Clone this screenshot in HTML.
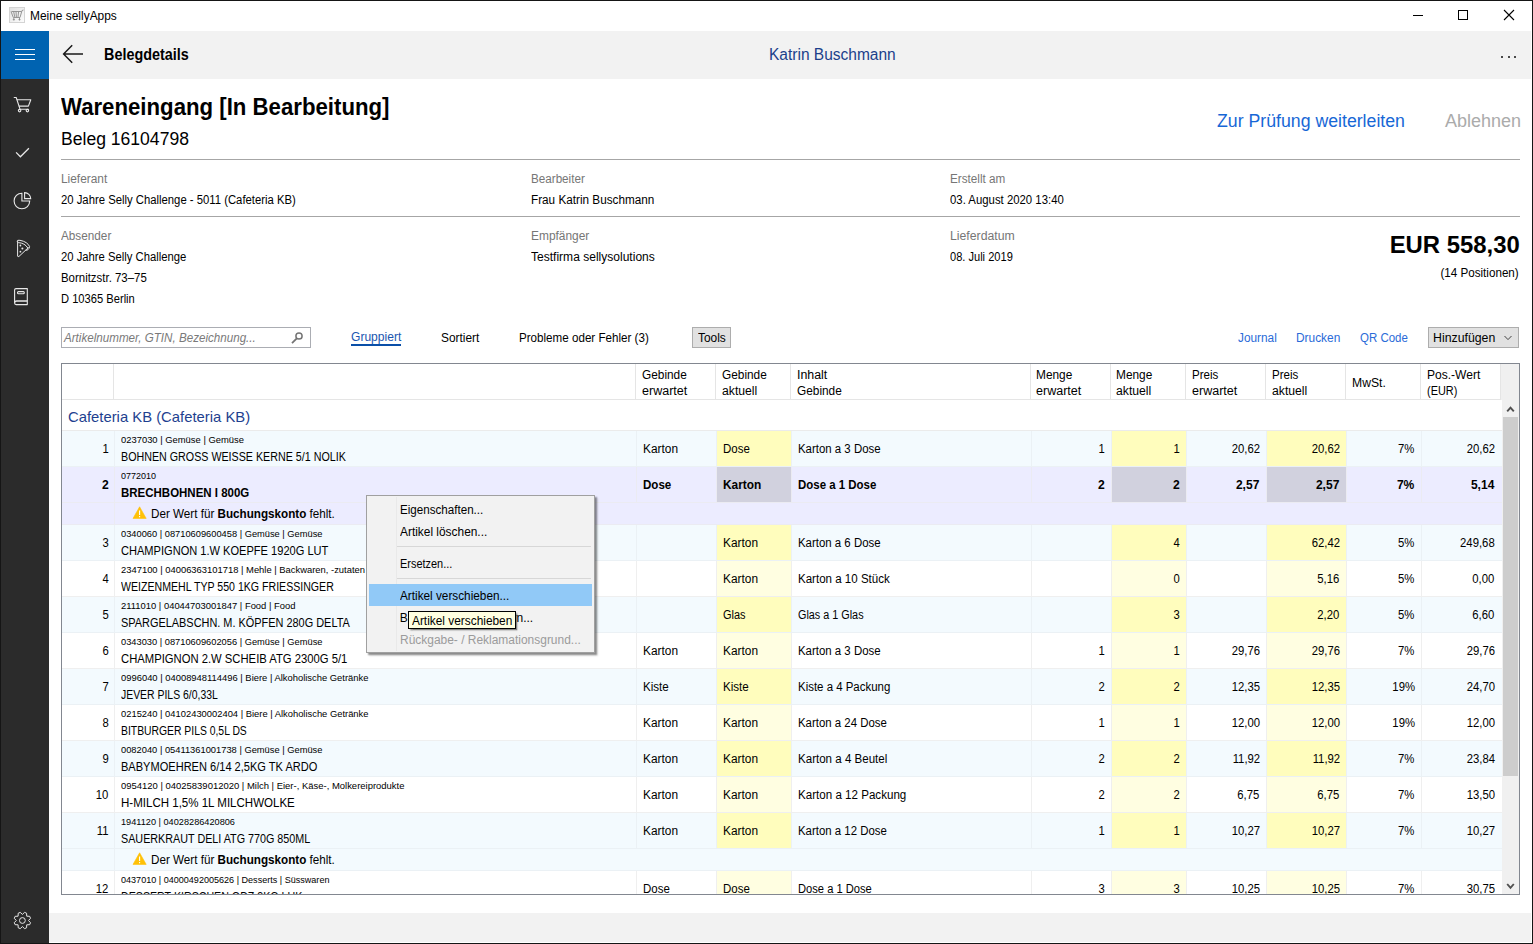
<!DOCTYPE html>
<html lang="de"><head><meta charset="utf-8"><title>Meine sellyApps</title>
<style>
html,body{margin:0;padding:0}
body{width:1533px;height:944px;overflow:hidden;background:#fff;position:relative;font-family:"Liberation Sans",sans-serif;color:#000}
.b,.t,svg{position:absolute}
.t{white-space:nowrap}
b{font-weight:700}
</style></head><body>
<div class="b" style="left:0px;top:0px;width:1533px;height:944px;background:#151515;"></div>
<div class="b" style="left:1px;top:1px;width:1531px;height:942px;background:#fff;"></div>
<div class="b" style="left:9px;top:7px;width:16px;height:16px;background:linear-gradient(135deg,#e2e2e2,#fcfcfc);box-sizing:border-box;border:1px solid #d4d4d4;"></div>
<svg style="left:9px;top:7px" width="16" height="16" viewBox="0 0 16 16" fill="none" stroke="#8c8c8c" stroke-width="0.9"><path d="M2 4.5 L4.3 10.5 H11 L13 3.5 L14.5 3"/><path d="M4.6 4.5 L5.8 10 M7 4.5 L7.4 10 M9.6 4.5 L9 10 M2.5 4.5 H12.5"/><path d="M4.8 11 V13.5 M10.5 11 V13.5 M3.8 12.6 H5.8 M9.5 12.6 H11.5"/></svg>
<div class="t" id="t1" style="top:9px;height:14px;line-height:14px;font-size:12px;left:29.78px;transform-origin:0 0;transform:scaleX(0.9934);">Meine sellyApps</div>
<div class="b" style="left:1413px;top:15px;width:10px;height:1px;background:#000;"></div>
<div class="b" style="left:1458px;top:10px;width:10px;height:10px;box-sizing:border-box;border:1px solid #000;"></div>
<svg style="left:1503px;top:9px" width="12" height="12" viewBox="0 0 12 12"><path d="M1 1 L11 11 M11 1 L1 11" stroke="#000" stroke-width="1.1" fill="none"/></svg>
<div class="b" style="left:49px;top:31px;width:1482px;height:48px;background:#f2f2f2;"></div>
<div class="b" style="left:1px;top:31px;width:48px;height:48px;background:#0063b1;"></div>
<div class="b" style="left:15px;top:49px;width:20px;height:1px;background:#fff;"></div>
<div class="b" style="left:15px;top:54px;width:20px;height:1px;background:#fff;"></div>
<div class="b" style="left:15px;top:59px;width:20px;height:1px;background:#fff;"></div>
<svg style="left:60px;top:42px" width="26" height="24" viewBox="0 0 26 24"><path d="M23 12 H4 M12.2 3.2 L3.6 12 L12.2 20.8" stroke="#1a1a1a" stroke-width="1.5" fill="none"/></svg>
<div class="t" id="t2" style="top:46px;height:17px;line-height:17px;font-size:16px;font-weight:700;left:104.04px;transform-origin:0 0;transform:scaleX(0.8988);">Belegdetails</div>
<div class="t" id="t3" style="top:46px;height:17px;line-height:17px;font-size:16px;color:#1b3f8b;left:769.04px;transform-origin:0 0;transform:scaleX(0.9694);">Katrin Buschmann</div>
<div class="b" style="left:1501px;top:56px;width:2px;height:2px;background:#111;border-radius:1px;"></div>
<div class="b" style="left:1508px;top:56px;width:2px;height:2px;background:#111;border-radius:1px;"></div>
<div class="b" style="left:1514px;top:56px;width:2px;height:2px;background:#111;border-radius:1px;"></div>
<div class="b" style="left:1px;top:79px;width:48px;height:864px;background:#2b2b2b;"></div>
<svg style="left:6px;top:88px" width="34" height="34" viewBox="6 88 34 34" fill="none" stroke="#e8e8e8" stroke-width="1.1" stroke-linecap="round" stroke-linejoin="round"><path d="M14.2 97.5 H16.2 L20 109.2 H28.4"/><path d="M17.3 99.8 H30.8 L28.4 106.1 H19.3"/><circle cx="19.6" cy="110.6" r="1.25"/><circle cx="27.4" cy="110.6" r="1.25"/></svg>
<svg style="left:6px;top:136px" width="34" height="34" viewBox="6 136 34 34" fill="none" stroke="#e8e8e8" stroke-width="1.25"><path d="M16.1 152.4 L20.4 156.8 L28.9 148.2"/></svg>
<svg style="left:6px;top:184px" width="34" height="34" viewBox="6 184 34 34" fill="none" stroke="#e8e8e8" stroke-width="1.1"><path d="M21.9 193.2 A7.8 7.8 0 1 0 29.7 201 H21.9 Z"/><path d="M24.6 192.6 V198.6 H30.7 A6.1 6.1 0 0 0 24.6 192.6 Z"/></svg>
<svg style="left:6px;top:232px" width="34" height="34" viewBox="6 232 34 34" fill="none" stroke="#e8e8e8" stroke-width="1" stroke-linejoin="round"><path d="M17.6 240.6 V256.2 Q18 257.2 19 256.4 L28.6 247.4"/><path d="M17 241.4 Q17.2 239.8 20 240.3 Q27.5 241.8 29.6 246.6 Q28.8 250.6 25.6 250.2"/><path d="M18.2 242.6 Q24.8 243 27.8 248"/><g fill="#e8e8e8" stroke="none"><circle cx="20.4" cy="245.5" r="0.9"/><circle cx="22.4" cy="248.6" r="1"/><circle cx="20.4" cy="251.7" r="0.9"/></g></svg>
<svg style="left:6px;top:280px" width="34" height="34" viewBox="6 280 34 34" fill="none" stroke="#e8e8e8" stroke-width="1.1" stroke-linejoin="round"><path d="M27.3 288.6 H16 Q14.6 288.6 14.6 290 V303 Q14.6 304.6 16.2 304.6 H27.3 Z"/><path d="M14.8 302.4 Q15 301 16.6 301 H27.3" stroke-width="1.4"/><rect x="17.5" y="291.6" width="6.8" height="2.2" rx="1"/></svg>
<svg style="left:6px;top:904px" width="34" height="34" viewBox="6 904 34 34" fill="none" stroke="#e8e8e8" stroke-width="1" stroke-linejoin="miter"><path d="M22.40 914.40 L24.58 912.39 L26.60 913.22 L26.71 916.19 L29.68 916.30 L30.51 918.32 L28.50 920.50 L30.51 922.68 L29.68 924.70 L26.71 924.81 L26.60 927.78 L24.58 928.61 L22.40 926.60 L20.22 928.61 L18.20 927.78 L18.09 924.81 L15.12 924.70 L14.29 922.68 L16.30 920.50 L14.29 918.32 L15.12 916.30 L18.09 916.19 L18.20 913.22 L20.22 912.39 Z"/><circle cx="22.4" cy="920.5" r="2.9" stroke-width="1"/></svg>
<div class="b" style="left:49px;top:913px;width:1482px;height:29px;background:#f2f2f2;"></div>
<div class="t" id="t4" style="top:94px;height:26px;line-height:26px;font-size:23px;font-weight:700;left:60.62px;transform-origin:0 0;transform:scaleX(0.9652);">Wareneingang [In Bearbeitung]</div>
<div class="t" id="t5" style="top:129px;height:20px;line-height:20px;font-size:18px;left:61.42px;transform-origin:0 0;transform:scaleX(0.9757);">Beleg 16104798</div>
<div class="t" id="t6" style="top:111px;height:20px;line-height:20px;font-size:18px;color:#1767d6;left:1216.92px;transform-origin:0 0;transform:scaleX(0.9835);">Zur Prüfung weiterleiten</div>
<div class="t" id="t7" style="top:111px;height:20px;line-height:20px;font-size:18px;color:#ababab;left:1444.92px;transform-origin:0 0;">Ablehnen</div>
<div class="b" style="left:61px;top:159px;width:1459px;height:1px;background:#a6a6a6;"></div>
<div class="b" style="left:61px;top:216px;width:1459px;height:1px;background:#a6a6a6;"></div>
<div class="t" id="t8" style="top:172px;height:14px;line-height:14px;font-size:12px;color:#767676;left:61.28px;transform-origin:0 0;transform:scaleX(0.9913);">Lieferant</div>
<div class="t" id="t9" style="top:193px;height:14px;line-height:14px;font-size:12px;left:61.28px;transform-origin:0 0;transform:scaleX(0.9420);">20 Jahre Selly Challenge - 5011 (Cafeteria KB)</div>
<div class="t" id="t10" style="top:229px;height:14px;line-height:14px;font-size:12px;color:#767676;left:61.28px;transform-origin:0 0;transform:scaleX(0.9790);">Absender</div>
<div class="t" id="t11" style="top:250px;height:14px;line-height:14px;font-size:12px;left:61.28px;transform-origin:0 0;transform:scaleX(0.9391);">20 Jahre Selly Challenge</div>
<div class="t" id="t12" style="top:271px;height:14px;line-height:14px;font-size:12px;left:61.28px;transform-origin:0 0;transform:scaleX(0.9526);">Bornitzstr. 73–75</div>
<div class="t" id="t13" style="top:292px;height:14px;line-height:14px;font-size:12px;left:61.28px;transform-origin:0 0;transform:scaleX(0.9295);">D 10365 Berlin</div>
<div class="t" id="t14" style="top:172px;height:14px;line-height:14px;font-size:12px;color:#767676;left:531.28px;transform-origin:0 0;transform:scaleX(0.9715);">Bearbeiter</div>
<div class="t" id="t15" style="top:193px;height:14px;line-height:14px;font-size:12px;left:531.28px;transform-origin:0 0;transform:scaleX(0.9781);">Frau Katrin Buschmann</div>
<div class="t" id="t16" style="top:229px;height:14px;line-height:14px;font-size:12px;color:#767676;left:531.28px;transform-origin:0 0;transform:scaleX(0.9931);">Empfänger</div>
<div class="t" id="t17" style="top:250px;height:14px;line-height:14px;font-size:12px;left:531.28px;transform-origin:0 0;transform:scaleX(1.0034);">Testfirma sellysolutions</div>
<div class="t" id="t18" style="top:172px;height:14px;line-height:14px;font-size:12px;color:#767676;left:949.78px;transform-origin:0 0;transform:scaleX(0.9755);">Erstellt am</div>
<div class="t" id="t19" style="top:193px;height:14px;line-height:14px;font-size:12px;left:949.78px;transform-origin:0 0;transform:scaleX(0.9474);">03. August 2020 13:40</div>
<div class="t" id="t20" style="top:229px;height:14px;line-height:14px;font-size:12px;color:#767676;left:949.78px;transform-origin:0 0;transform:scaleX(1.0224);">Lieferdatum</div>
<div class="t" id="t21" style="top:250px;height:14px;line-height:14px;font-size:12px;left:949.78px;transform-origin:0 0;transform:scaleX(0.9226);">08. Juli 2019</div>
<div class="t" id="t22" style="top:231px;height:27px;line-height:27px;font-size:24px;font-weight:700;right:13.56px;transform-origin:100% 0;transform:scaleX(0.9950);">EUR 558,30</div>
<div class="t" id="t23" style="top:266px;height:14px;line-height:14px;font-size:12px;right:14.28px;transform-origin:100% 0;transform:scaleX(0.9700);">(14 Positionen)</div>
<div class="b" style="left:61px;top:327px;width:250px;height:21px;background:#fff;box-sizing:border-box;border:1px solid #abadb3;"></div>
<div class="t" id="t24" style="top:331px;height:14px;line-height:14px;font-size:12px;color:#7a7a7a;font-style:italic;left:63.78px;transform-origin:0 0;transform:scaleX(0.9683);">Artikelnummer, GTIN, Bezeichnung...</div>
<svg style="left:290px;top:330px" width="16" height="16" viewBox="290 330 16 16" fill="none" stroke="#747474" stroke-width="1.5"><circle cx="299" cy="336" r="3.1"/><path d="M296.8 338.3 L292 343.1" stroke-width="1.8"/></svg>
<div class="t" id="t25" style="top:330px;height:14px;line-height:14px;font-size:12px;color:#1a56b0;left:351.28px;transform-origin:0 0;transform:scaleX(1.0053);">Gruppiert</div>
<div class="b" style="left:351px;top:344px;width:50px;height:2px;background:#0a4fa8;"></div>
<div class="t" id="t26" style="top:330.5px;height:14px;line-height:14px;font-size:12px;left:440.78px;transform-origin:0 0;transform:scaleX(0.9899);">Sortiert</div>
<div class="t" id="t27" style="top:330.5px;height:14px;line-height:14px;font-size:12px;left:519.28px;transform-origin:0 0;transform:scaleX(0.9682);">Probleme oder Fehler (3)</div>
<div class="b" style="left:692px;top:327px;width:39px;height:21px;background:#e1e1e1;box-sizing:border-box;border:1px solid #adadad;"></div>
<div class="t" id="t28" style="top:330.5px;height:14px;line-height:14px;font-size:12px;left:697.78px;transform-origin:0 0;transform:scaleX(0.9922);">Tools</div>
<div class="t" id="t29" style="top:330.5px;height:14px;line-height:14px;font-size:12px;color:#2a6bd8;left:1237.78px;transform-origin:0 0;transform:scaleX(0.9857);">Journal</div>
<div class="t" id="t30" style="top:330.5px;height:14px;line-height:14px;font-size:12px;color:#2a6bd8;left:1296.28px;transform-origin:0 0;transform:scaleX(0.9912);">Drucken</div>
<div class="t" id="t31" style="top:330.5px;height:14px;line-height:14px;font-size:12px;color:#2a6bd8;left:1360.28px;transform-origin:0 0;transform:scaleX(0.9553);">QR Code</div>
<div class="b" style="left:1428px;top:327px;width:91px;height:21px;background:#e1e1e1;box-sizing:border-box;border:1px solid #adadad;"></div>
<div class="t" id="t32" style="top:330.5px;height:14px;line-height:14px;font-size:12px;left:1433.28px;transform-origin:0 0;transform:scaleX(1.0260);">Hinzufügen</div>
<svg style="left:1503px;top:334px" width="10" height="8" viewBox="0 0 10 8"><path d="M1.5 2 L5 5.6 L8.5 2" stroke="#444" stroke-width="1" fill="none"/></svg>
<div class="b" style="left:61px;top:363px;width:1459px;height:532px;background:#fff;box-sizing:border-box;border:1px solid #828790;"></div>
<div class="b" style="left:62px;top:364px;width:1439px;height:35px;background:#fff;"></div>
<div class="b" style="left:1501px;top:364px;width:18px;height:36px;background:#f0f0f0;"></div>
<div class="b" style="left:62px;top:399px;width:1439px;height:1px;background:#e5e5e5;"></div>
<div class="b" style="left:113px;top:364px;width:1px;height:36px;background:#e5e5e5;"></div>
<div class="b" style="left:635px;top:364px;width:1px;height:36px;background:#e5e5e5;"></div>
<div class="b" style="left:715px;top:364px;width:1px;height:36px;background:#e5e5e5;"></div>
<div class="b" style="left:790px;top:364px;width:1px;height:36px;background:#e5e5e5;"></div>
<div class="b" style="left:1030px;top:364px;width:1px;height:36px;background:#e5e5e5;"></div>
<div class="b" style="left:1110px;top:364px;width:1px;height:36px;background:#e5e5e5;"></div>
<div class="b" style="left:1185px;top:364px;width:1px;height:36px;background:#e5e5e5;"></div>
<div class="b" style="left:1265px;top:364px;width:1px;height:36px;background:#e5e5e5;"></div>
<div class="b" style="left:1345px;top:364px;width:1px;height:36px;background:#e5e5e5;"></div>
<div class="b" style="left:1420px;top:364px;width:1px;height:36px;background:#e5e5e5;"></div>
<div class="b" style="left:1500px;top:364px;width:1px;height:36px;background:#e5e5e5;"></div>
<div class="t" id="t33" style="top:368px;height:14px;line-height:14px;font-size:12px;left:642.28px;transform-origin:0 0;transform:scaleX(0.9872);">Gebinde</div>
<div class="t" id="t34" style="top:384px;height:14px;line-height:14px;font-size:12px;left:642.28px;transform-origin:0 0;transform:scaleX(1.0447);">erwartet</div>
<div class="t" id="t35" style="top:368px;height:14px;line-height:14px;font-size:12px;left:722.28px;transform-origin:0 0;transform:scaleX(0.9872);">Gebinde</div>
<div class="t" id="t36" style="top:384px;height:14px;line-height:14px;font-size:12px;left:722.28px;transform-origin:0 0;transform:scaleX(1.0175);">aktuell</div>
<div class="t" id="t37" style="top:368px;height:14px;line-height:14px;font-size:12px;left:797.28px;transform-origin:0 0;transform:scaleX(1.0319);">Inhalt</div>
<div class="t" id="t38" style="top:384px;height:14px;line-height:14px;font-size:12px;left:797.28px;transform-origin:0 0;transform:scaleX(0.9872);">Gebinde</div>
<div class="t" id="t39" style="top:368px;height:14px;line-height:14px;font-size:12px;left:1036.28px;transform-origin:0 0;transform:scaleX(0.9889);">Menge</div>
<div class="t" id="t40" style="top:384px;height:14px;line-height:14px;font-size:12px;left:1036.28px;transform-origin:0 0;transform:scaleX(1.0447);">erwartet</div>
<div class="t" id="t41" style="top:368px;height:14px;line-height:14px;font-size:12px;left:1116.28px;transform-origin:0 0;transform:scaleX(0.9889);">Menge</div>
<div class="t" id="t42" style="top:384px;height:14px;line-height:14px;font-size:12px;left:1116.28px;transform-origin:0 0;transform:scaleX(1.0175);">aktuell</div>
<div class="t" id="t43" style="top:368px;height:14px;line-height:14px;font-size:12px;left:1191.78px;transform-origin:0 0;transform:scaleX(0.9617);">Preis</div>
<div class="t" id="t44" style="top:384px;height:14px;line-height:14px;font-size:12px;left:1191.78px;transform-origin:0 0;transform:scaleX(1.0447);">erwartet</div>
<div class="t" id="t45" style="top:368px;height:14px;line-height:14px;font-size:12px;left:1271.78px;transform-origin:0 0;transform:scaleX(0.9617);">Preis</div>
<div class="t" id="t46" style="top:384px;height:14px;line-height:14px;font-size:12px;left:1271.78px;transform-origin:0 0;transform:scaleX(1.0175);">aktuell</div>
<div class="t" id="t47" style="top:368px;height:14px;line-height:14px;font-size:12px;left:1426.78px;transform-origin:0 0;transform:scaleX(1.0032);">Pos.-Wert</div>
<div class="t" id="t48" style="top:384px;height:14px;line-height:14px;font-size:12px;left:1426.78px;transform-origin:0 0;transform:scaleX(0.9090);">(EUR)</div>
<div class="t" id="t49" style="top:376px;height:14px;line-height:14px;font-size:12px;left:1351.78px;transform-origin:0 0;transform:scaleX(1.0136);">MwSt.</div>
<div class="b" style="left:1502px;top:400px;width:17px;height:494px;background:#f0f0f0;"></div>
<div class="b" style="left:1503px;top:417px;width:15px;height:359px;background:#cdcdcd;"></div>
<svg style="left:1505px;top:404px" width="11" height="10" viewBox="1505 404 11 10"><path d="M1507.2 411.4 L1510.5 407.6 L1513.8 411.4" stroke="#505050" stroke-width="1.9" fill="none"/></svg>
<svg style="left:1505px;top:880px" width="11" height="11" viewBox="1505 880 11 11"><path d="M1507.2 884 L1510.5 887.8 L1513.8 884" stroke="#505050" stroke-width="1.9" fill="none"/></svg>
<div class="t" id="t50" style="top:408px;height:17px;line-height:17px;font-size:15px;color:#1e3f8f;left:68.10px;transform-origin:0 0;transform:scaleX(0.9884);">Cafeteria KB (Cafeteria KB)</div>
<div class="b" style="left:62px;top:430px;width:1440px;height:1px;background:#ebebeb;"></div>
<div class="b" style="left:62px;top:400px;width:1440px;height:494px;overflow:hidden">
<div class="b" style="left:0px;top:31px;width:1440px;height:36px;background:#f3fafe;"></div>
<div class="b" style="left:655px;top:31px;width:74px;height:35px;background:#fffdbd;"></div>
<div class="b" style="left:1050px;top:31px;width:74px;height:35px;background:#fffdbd;"></div>
<div class="b" style="left:1205px;top:31px;width:79px;height:35px;background:#fffdbd;"></div>
<div class="b" style="left:0px;top:66px;width:1440px;height:1px;background:#ebf1f5;"></div>
<div class="b" style="left:52px;top:31px;width:1px;height:36px;background:#ebf1f5;"></div>
<div class="b" style="left:574px;top:31px;width:1px;height:36px;background:#ebf1f5;"></div>
<div class="b" style="left:654px;top:31px;width:1px;height:36px;background:#ebf1f5;"></div>
<div class="b" style="left:729px;top:31px;width:1px;height:36px;background:#ebf1f5;"></div>
<div class="b" style="left:969px;top:31px;width:1px;height:36px;background:#ebf1f5;"></div>
<div class="b" style="left:1049px;top:31px;width:1px;height:36px;background:#ebf1f5;"></div>
<div class="b" style="left:1124px;top:31px;width:1px;height:36px;background:#ebf1f5;"></div>
<div class="b" style="left:1204px;top:31px;width:1px;height:36px;background:#ebf1f5;"></div>
<div class="b" style="left:1284px;top:31px;width:1px;height:36px;background:#ebf1f5;"></div>
<div class="b" style="left:1359px;top:31px;width:1px;height:36px;background:#ebf1f5;"></div>
<div class="b" style="left:0px;top:67px;width:1440px;height:58px;background:#ececff;"></div>
<div class="b" style="left:655px;top:67px;width:74px;height:35px;background:#d1d1de;"></div>
<div class="b" style="left:1050px;top:67px;width:74px;height:35px;background:#d1d1de;"></div>
<div class="b" style="left:1205px;top:67px;width:79px;height:35px;background:#d1d1de;"></div>
<div class="b" style="left:0px;top:102px;width:1440px;height:1px;background:#ebebf2;"></div>
<div class="b" style="left:0px;top:124px;width:1440px;height:1px;background:#ebebf2;"></div>
<div class="b" style="left:52px;top:67px;width:1px;height:58px;background:#ebebf2;"></div>
<div class="b" style="left:574px;top:67px;width:1px;height:36px;background:#ebebf2;"></div>
<div class="b" style="left:654px;top:67px;width:1px;height:36px;background:#ebebf2;"></div>
<div class="b" style="left:729px;top:67px;width:1px;height:36px;background:#ebebf2;"></div>
<div class="b" style="left:969px;top:67px;width:1px;height:36px;background:#ebebf2;"></div>
<div class="b" style="left:1049px;top:67px;width:1px;height:36px;background:#ebebf2;"></div>
<div class="b" style="left:1124px;top:67px;width:1px;height:36px;background:#ebebf2;"></div>
<div class="b" style="left:1204px;top:67px;width:1px;height:36px;background:#ebebf2;"></div>
<div class="b" style="left:1284px;top:67px;width:1px;height:36px;background:#ebebf2;"></div>
<div class="b" style="left:1359px;top:67px;width:1px;height:36px;background:#ebebf2;"></div>
<div class="b" style="left:0px;top:125px;width:1440px;height:36px;background:#f3fafe;"></div>
<div class="b" style="left:655px;top:125px;width:74px;height:35px;background:#fffdbd;"></div>
<div class="b" style="left:1050px;top:125px;width:74px;height:35px;background:#fffdbd;"></div>
<div class="b" style="left:1205px;top:125px;width:79px;height:35px;background:#fffdbd;"></div>
<div class="b" style="left:0px;top:160px;width:1440px;height:1px;background:#ebf1f5;"></div>
<div class="b" style="left:52px;top:125px;width:1px;height:36px;background:#ebf1f5;"></div>
<div class="b" style="left:574px;top:125px;width:1px;height:36px;background:#ebf1f5;"></div>
<div class="b" style="left:654px;top:125px;width:1px;height:36px;background:#ebf1f5;"></div>
<div class="b" style="left:729px;top:125px;width:1px;height:36px;background:#ebf1f5;"></div>
<div class="b" style="left:969px;top:125px;width:1px;height:36px;background:#ebf1f5;"></div>
<div class="b" style="left:1049px;top:125px;width:1px;height:36px;background:#ebf1f5;"></div>
<div class="b" style="left:1124px;top:125px;width:1px;height:36px;background:#ebf1f5;"></div>
<div class="b" style="left:1204px;top:125px;width:1px;height:36px;background:#ebf1f5;"></div>
<div class="b" style="left:1284px;top:125px;width:1px;height:36px;background:#ebf1f5;"></div>
<div class="b" style="left:1359px;top:125px;width:1px;height:36px;background:#ebf1f5;"></div>
<div class="b" style="left:0px;top:161px;width:1440px;height:36px;background:#fff;"></div>
<div class="b" style="left:655px;top:161px;width:74px;height:35px;background:#fffee1;"></div>
<div class="b" style="left:1050px;top:161px;width:74px;height:35px;background:#fffee1;"></div>
<div class="b" style="left:1205px;top:161px;width:79px;height:35px;background:#fffee1;"></div>
<div class="b" style="left:0px;top:196px;width:1440px;height:1px;background:#efefef;"></div>
<div class="b" style="left:52px;top:161px;width:1px;height:36px;background:#efefef;"></div>
<div class="b" style="left:574px;top:161px;width:1px;height:36px;background:#efefef;"></div>
<div class="b" style="left:654px;top:161px;width:1px;height:36px;background:#efefef;"></div>
<div class="b" style="left:729px;top:161px;width:1px;height:36px;background:#efefef;"></div>
<div class="b" style="left:969px;top:161px;width:1px;height:36px;background:#efefef;"></div>
<div class="b" style="left:1049px;top:161px;width:1px;height:36px;background:#efefef;"></div>
<div class="b" style="left:1124px;top:161px;width:1px;height:36px;background:#efefef;"></div>
<div class="b" style="left:1204px;top:161px;width:1px;height:36px;background:#efefef;"></div>
<div class="b" style="left:1284px;top:161px;width:1px;height:36px;background:#efefef;"></div>
<div class="b" style="left:1359px;top:161px;width:1px;height:36px;background:#efefef;"></div>
<div class="b" style="left:0px;top:197px;width:1440px;height:36px;background:#f3fafe;"></div>
<div class="b" style="left:655px;top:197px;width:74px;height:35px;background:#fffdbd;"></div>
<div class="b" style="left:1050px;top:197px;width:74px;height:35px;background:#fffdbd;"></div>
<div class="b" style="left:1205px;top:197px;width:79px;height:35px;background:#fffdbd;"></div>
<div class="b" style="left:0px;top:232px;width:1440px;height:1px;background:#ebf1f5;"></div>
<div class="b" style="left:52px;top:197px;width:1px;height:36px;background:#ebf1f5;"></div>
<div class="b" style="left:574px;top:197px;width:1px;height:36px;background:#ebf1f5;"></div>
<div class="b" style="left:654px;top:197px;width:1px;height:36px;background:#ebf1f5;"></div>
<div class="b" style="left:729px;top:197px;width:1px;height:36px;background:#ebf1f5;"></div>
<div class="b" style="left:969px;top:197px;width:1px;height:36px;background:#ebf1f5;"></div>
<div class="b" style="left:1049px;top:197px;width:1px;height:36px;background:#ebf1f5;"></div>
<div class="b" style="left:1124px;top:197px;width:1px;height:36px;background:#ebf1f5;"></div>
<div class="b" style="left:1204px;top:197px;width:1px;height:36px;background:#ebf1f5;"></div>
<div class="b" style="left:1284px;top:197px;width:1px;height:36px;background:#ebf1f5;"></div>
<div class="b" style="left:1359px;top:197px;width:1px;height:36px;background:#ebf1f5;"></div>
<div class="b" style="left:0px;top:233px;width:1440px;height:36px;background:#fff;"></div>
<div class="b" style="left:655px;top:233px;width:74px;height:35px;background:#fffee1;"></div>
<div class="b" style="left:1050px;top:233px;width:74px;height:35px;background:#fffee1;"></div>
<div class="b" style="left:1205px;top:233px;width:79px;height:35px;background:#fffee1;"></div>
<div class="b" style="left:0px;top:268px;width:1440px;height:1px;background:#efefef;"></div>
<div class="b" style="left:52px;top:233px;width:1px;height:36px;background:#efefef;"></div>
<div class="b" style="left:574px;top:233px;width:1px;height:36px;background:#efefef;"></div>
<div class="b" style="left:654px;top:233px;width:1px;height:36px;background:#efefef;"></div>
<div class="b" style="left:729px;top:233px;width:1px;height:36px;background:#efefef;"></div>
<div class="b" style="left:969px;top:233px;width:1px;height:36px;background:#efefef;"></div>
<div class="b" style="left:1049px;top:233px;width:1px;height:36px;background:#efefef;"></div>
<div class="b" style="left:1124px;top:233px;width:1px;height:36px;background:#efefef;"></div>
<div class="b" style="left:1204px;top:233px;width:1px;height:36px;background:#efefef;"></div>
<div class="b" style="left:1284px;top:233px;width:1px;height:36px;background:#efefef;"></div>
<div class="b" style="left:1359px;top:233px;width:1px;height:36px;background:#efefef;"></div>
<div class="b" style="left:0px;top:269px;width:1440px;height:36px;background:#f3fafe;"></div>
<div class="b" style="left:655px;top:269px;width:74px;height:35px;background:#fffdbd;"></div>
<div class="b" style="left:1050px;top:269px;width:74px;height:35px;background:#fffdbd;"></div>
<div class="b" style="left:1205px;top:269px;width:79px;height:35px;background:#fffdbd;"></div>
<div class="b" style="left:0px;top:304px;width:1440px;height:1px;background:#ebf1f5;"></div>
<div class="b" style="left:52px;top:269px;width:1px;height:36px;background:#ebf1f5;"></div>
<div class="b" style="left:574px;top:269px;width:1px;height:36px;background:#ebf1f5;"></div>
<div class="b" style="left:654px;top:269px;width:1px;height:36px;background:#ebf1f5;"></div>
<div class="b" style="left:729px;top:269px;width:1px;height:36px;background:#ebf1f5;"></div>
<div class="b" style="left:969px;top:269px;width:1px;height:36px;background:#ebf1f5;"></div>
<div class="b" style="left:1049px;top:269px;width:1px;height:36px;background:#ebf1f5;"></div>
<div class="b" style="left:1124px;top:269px;width:1px;height:36px;background:#ebf1f5;"></div>
<div class="b" style="left:1204px;top:269px;width:1px;height:36px;background:#ebf1f5;"></div>
<div class="b" style="left:1284px;top:269px;width:1px;height:36px;background:#ebf1f5;"></div>
<div class="b" style="left:1359px;top:269px;width:1px;height:36px;background:#ebf1f5;"></div>
<div class="b" style="left:0px;top:305px;width:1440px;height:36px;background:#fff;"></div>
<div class="b" style="left:655px;top:305px;width:74px;height:35px;background:#fffee1;"></div>
<div class="b" style="left:1050px;top:305px;width:74px;height:35px;background:#fffee1;"></div>
<div class="b" style="left:1205px;top:305px;width:79px;height:35px;background:#fffee1;"></div>
<div class="b" style="left:0px;top:340px;width:1440px;height:1px;background:#efefef;"></div>
<div class="b" style="left:52px;top:305px;width:1px;height:36px;background:#efefef;"></div>
<div class="b" style="left:574px;top:305px;width:1px;height:36px;background:#efefef;"></div>
<div class="b" style="left:654px;top:305px;width:1px;height:36px;background:#efefef;"></div>
<div class="b" style="left:729px;top:305px;width:1px;height:36px;background:#efefef;"></div>
<div class="b" style="left:969px;top:305px;width:1px;height:36px;background:#efefef;"></div>
<div class="b" style="left:1049px;top:305px;width:1px;height:36px;background:#efefef;"></div>
<div class="b" style="left:1124px;top:305px;width:1px;height:36px;background:#efefef;"></div>
<div class="b" style="left:1204px;top:305px;width:1px;height:36px;background:#efefef;"></div>
<div class="b" style="left:1284px;top:305px;width:1px;height:36px;background:#efefef;"></div>
<div class="b" style="left:1359px;top:305px;width:1px;height:36px;background:#efefef;"></div>
<div class="b" style="left:0px;top:341px;width:1440px;height:36px;background:#f3fafe;"></div>
<div class="b" style="left:655px;top:341px;width:74px;height:35px;background:#fffdbd;"></div>
<div class="b" style="left:1050px;top:341px;width:74px;height:35px;background:#fffdbd;"></div>
<div class="b" style="left:1205px;top:341px;width:79px;height:35px;background:#fffdbd;"></div>
<div class="b" style="left:0px;top:376px;width:1440px;height:1px;background:#ebf1f5;"></div>
<div class="b" style="left:52px;top:341px;width:1px;height:36px;background:#ebf1f5;"></div>
<div class="b" style="left:574px;top:341px;width:1px;height:36px;background:#ebf1f5;"></div>
<div class="b" style="left:654px;top:341px;width:1px;height:36px;background:#ebf1f5;"></div>
<div class="b" style="left:729px;top:341px;width:1px;height:36px;background:#ebf1f5;"></div>
<div class="b" style="left:969px;top:341px;width:1px;height:36px;background:#ebf1f5;"></div>
<div class="b" style="left:1049px;top:341px;width:1px;height:36px;background:#ebf1f5;"></div>
<div class="b" style="left:1124px;top:341px;width:1px;height:36px;background:#ebf1f5;"></div>
<div class="b" style="left:1204px;top:341px;width:1px;height:36px;background:#ebf1f5;"></div>
<div class="b" style="left:1284px;top:341px;width:1px;height:36px;background:#ebf1f5;"></div>
<div class="b" style="left:1359px;top:341px;width:1px;height:36px;background:#ebf1f5;"></div>
<div class="b" style="left:0px;top:377px;width:1440px;height:36px;background:#fff;"></div>
<div class="b" style="left:655px;top:377px;width:74px;height:35px;background:#fffee1;"></div>
<div class="b" style="left:1050px;top:377px;width:74px;height:35px;background:#fffee1;"></div>
<div class="b" style="left:1205px;top:377px;width:79px;height:35px;background:#fffee1;"></div>
<div class="b" style="left:0px;top:412px;width:1440px;height:1px;background:#efefef;"></div>
<div class="b" style="left:52px;top:377px;width:1px;height:36px;background:#efefef;"></div>
<div class="b" style="left:574px;top:377px;width:1px;height:36px;background:#efefef;"></div>
<div class="b" style="left:654px;top:377px;width:1px;height:36px;background:#efefef;"></div>
<div class="b" style="left:729px;top:377px;width:1px;height:36px;background:#efefef;"></div>
<div class="b" style="left:969px;top:377px;width:1px;height:36px;background:#efefef;"></div>
<div class="b" style="left:1049px;top:377px;width:1px;height:36px;background:#efefef;"></div>
<div class="b" style="left:1124px;top:377px;width:1px;height:36px;background:#efefef;"></div>
<div class="b" style="left:1204px;top:377px;width:1px;height:36px;background:#efefef;"></div>
<div class="b" style="left:1284px;top:377px;width:1px;height:36px;background:#efefef;"></div>
<div class="b" style="left:1359px;top:377px;width:1px;height:36px;background:#efefef;"></div>
<div class="b" style="left:0px;top:413px;width:1440px;height:58px;background:#f3fafe;"></div>
<div class="b" style="left:655px;top:413px;width:74px;height:35px;background:#fffdbd;"></div>
<div class="b" style="left:1050px;top:413px;width:74px;height:35px;background:#fffdbd;"></div>
<div class="b" style="left:1205px;top:413px;width:79px;height:35px;background:#fffdbd;"></div>
<div class="b" style="left:0px;top:448px;width:1440px;height:1px;background:#ebf1f5;"></div>
<div class="b" style="left:0px;top:470px;width:1440px;height:1px;background:#ebf1f5;"></div>
<div class="b" style="left:52px;top:413px;width:1px;height:58px;background:#ebf1f5;"></div>
<div class="b" style="left:574px;top:413px;width:1px;height:36px;background:#ebf1f5;"></div>
<div class="b" style="left:654px;top:413px;width:1px;height:36px;background:#ebf1f5;"></div>
<div class="b" style="left:729px;top:413px;width:1px;height:36px;background:#ebf1f5;"></div>
<div class="b" style="left:969px;top:413px;width:1px;height:36px;background:#ebf1f5;"></div>
<div class="b" style="left:1049px;top:413px;width:1px;height:36px;background:#ebf1f5;"></div>
<div class="b" style="left:1124px;top:413px;width:1px;height:36px;background:#ebf1f5;"></div>
<div class="b" style="left:1204px;top:413px;width:1px;height:36px;background:#ebf1f5;"></div>
<div class="b" style="left:1284px;top:413px;width:1px;height:36px;background:#ebf1f5;"></div>
<div class="b" style="left:1359px;top:413px;width:1px;height:36px;background:#ebf1f5;"></div>
<div class="b" style="left:0px;top:471px;width:1440px;height:36px;background:#fff;"></div>
<div class="b" style="left:655px;top:471px;width:74px;height:35px;background:#fffee1;"></div>
<div class="b" style="left:1050px;top:471px;width:74px;height:35px;background:#fffee1;"></div>
<div class="b" style="left:1205px;top:471px;width:79px;height:35px;background:#fffee1;"></div>
<div class="b" style="left:0px;top:506px;width:1440px;height:1px;background:#efefef;"></div>
<div class="b" style="left:52px;top:471px;width:1px;height:36px;background:#efefef;"></div>
<div class="b" style="left:574px;top:471px;width:1px;height:36px;background:#efefef;"></div>
<div class="b" style="left:654px;top:471px;width:1px;height:36px;background:#efefef;"></div>
<div class="b" style="left:729px;top:471px;width:1px;height:36px;background:#efefef;"></div>
<div class="b" style="left:969px;top:471px;width:1px;height:36px;background:#efefef;"></div>
<div class="b" style="left:1049px;top:471px;width:1px;height:36px;background:#efefef;"></div>
<div class="b" style="left:1124px;top:471px;width:1px;height:36px;background:#efefef;"></div>
<div class="b" style="left:1204px;top:471px;width:1px;height:36px;background:#efefef;"></div>
<div class="b" style="left:1284px;top:471px;width:1px;height:36px;background:#efefef;"></div>
<div class="b" style="left:1359px;top:471px;width:1px;height:36px;background:#efefef;"></div>
</div>
<div class="b" style="left:0;top:400px;width:1502px;height:494px;overflow:hidden"><div class="b" style="left:0;top:-400px;width:1533px;height:944px">
<div class="t" id="t51" style="top:442px;height:14px;line-height:14px;font-size:12px;right:1424.78px;transform-origin:100% 0;transform:scaleX(0.9388);">1</div>
<div class="t" id="t52" style="top:435px;height:10px;line-height:10px;font-size:9px;left:120.96px;transform-origin:0 0;transform:scaleX(1.0443);">0237030 | Gemüse | Gemüse</div>
<div class="t" id="t53" style="top:450px;height:14px;line-height:14px;font-size:12px;left:120.78px;transform-origin:0 0;transform:scaleX(0.8918);">BOHNEN GROSS WEISSE KERNE 5/1 NOLIK</div>
<div class="t" id="t54" style="top:442px;height:14px;line-height:14px;font-size:12px;left:642.78px;transform-origin:0 0;transform:scaleX(0.9911);">Karton</div>
<div class="t" id="t55" style="top:442px;height:14px;line-height:14px;font-size:12px;left:722.78px;transform-origin:0 0;transform:scaleX(0.9565);">Dose</div>
<div class="t" id="t56" style="top:442px;height:14px;line-height:14px;font-size:12px;left:797.78px;transform-origin:0 0;transform:scaleX(0.9519);">Karton a 3 Dose</div>
<div class="t" id="t57" style="top:442px;height:14px;line-height:14px;font-size:12px;right:428.78px;transform-origin:100% 0;transform:scaleX(0.9388);">1</div>
<div class="t" id="t58" style="top:442px;height:14px;line-height:14px;font-size:12px;right:353.28px;transform-origin:100% 0;transform:scaleX(0.9388);">1</div>
<div class="t" id="t59" style="top:442px;height:14px;line-height:14px;font-size:12px;right:273.28px;transform-origin:100% 0;transform:scaleX(0.9436);">20,62</div>
<div class="t" id="t60" style="top:442px;height:14px;line-height:14px;font-size:12px;right:193.28px;transform-origin:100% 0;transform:scaleX(0.9436);">20,62</div>
<div class="t" id="t61" style="top:442px;height:14px;line-height:14px;font-size:12px;right:118.28px;transform-origin:100% 0;transform:scaleX(0.9434);">7%</div>
<div class="t" id="t62" style="top:442px;height:14px;line-height:14px;font-size:12px;right:38.28px;transform-origin:100% 0;transform:scaleX(0.9436);">20,62</div>
<div class="t" id="t63" style="top:478px;height:14px;line-height:14px;font-size:12px;font-weight:700;right:1424.78px;transform-origin:100% 0;transform:scaleX(1.0120);">2</div>
<div class="t" id="t64" style="top:471px;height:10px;line-height:10px;font-size:9px;left:120.96px;transform-origin:0 0;transform:scaleX(0.9979);">0772010</div>
<div class="t" id="t65" style="top:486px;height:14px;line-height:14px;font-size:12px;font-weight:700;left:120.78px;transform-origin:0 0;transform:scaleX(0.9572);">BRECHBOHNEN I 800G</div>
<div class="t" id="t66" style="top:478px;height:14px;line-height:14px;font-size:12px;font-weight:700;left:642.78px;transform-origin:0 0;transform:scaleX(0.9643);">Dose</div>
<div class="t" id="t67" style="top:478px;height:14px;line-height:14px;font-size:12px;font-weight:700;left:722.78px;transform-origin:0 0;transform:scaleX(0.9903);">Karton</div>
<div class="t" id="t68" style="top:478px;height:14px;line-height:14px;font-size:12px;font-weight:700;left:797.78px;transform-origin:0 0;transform:scaleX(0.9543);">Dose a 1 Dose</div>
<div class="t" id="t69" style="top:478px;height:14px;line-height:14px;font-size:12px;font-weight:700;right:428.78px;transform-origin:100% 0;transform:scaleX(1.0120);">2</div>
<div class="t" id="t70" style="top:478px;height:14px;line-height:14px;font-size:12px;font-weight:700;right:353.28px;transform-origin:100% 0;transform:scaleX(1.0120);">2</div>
<div class="t" id="t71" style="top:478px;height:14px;line-height:14px;font-size:12px;font-weight:700;right:273.28px;transform-origin:100% 0;transform:scaleX(1.0034);">2,57</div>
<div class="t" id="t72" style="top:478px;height:14px;line-height:14px;font-size:12px;font-weight:700;right:193.28px;transform-origin:100% 0;transform:scaleX(1.0034);">2,57</div>
<div class="t" id="t73" style="top:478px;height:14px;line-height:14px;font-size:12px;font-weight:700;right:118.28px;transform-origin:100% 0;transform:scaleX(1.0055);">7%</div>
<div class="t" id="t74" style="top:478px;height:14px;line-height:14px;font-size:12px;font-weight:700;right:38.28px;transform-origin:100% 0;transform:scaleX(1.0034);">5,14</div>
<svg style="left:132px;top:506px" width="16" height="14" viewBox="0 0 16 14"><path d="M7.6 0.8 L14.2 12.4 H1 Z" fill="#ffc107" stroke="#ffc107" stroke-width="0.6" stroke-linejoin="round"/><path d="M7.6 4.6 V8.9 M7.6 9.9 V11.2" stroke="#fff" stroke-width="1.1"/></svg>
<div class="t" id="t75" style="top:507px;height:14px;line-height:14px;font-size:12px;left:151.28px;transform-origin:0 0;transform:scaleX(0.9717);">Der Wert für <b>Buchungskonto</b> fehlt.</div>
<div class="t" id="t76" style="top:536px;height:14px;line-height:14px;font-size:12px;right:1424.78px;transform-origin:100% 0;transform:scaleX(0.9388);">3</div>
<div class="t" id="t77" style="top:529px;height:10px;line-height:10px;font-size:9px;left:120.96px;transform-origin:0 0;transform:scaleX(1.0323);">0340060 | 08710609600458 | Gemüse | Gemüse</div>
<div class="t" id="t78" style="top:544px;height:14px;line-height:14px;font-size:12px;left:120.78px;transform-origin:0 0;transform:scaleX(0.9225);">CHAMPIGNON 1.W KOEPFE 1920G LUT</div>
<div class="t" id="t79" style="top:536px;height:14px;line-height:14px;font-size:12px;left:722.78px;transform-origin:0 0;transform:scaleX(0.9911);">Karton</div>
<div class="t" id="t80" style="top:536px;height:14px;line-height:14px;font-size:12px;left:797.78px;transform-origin:0 0;transform:scaleX(0.9519);">Karton a 6 Dose</div>
<div class="t" id="t81" style="top:536px;height:14px;line-height:14px;font-size:12px;right:353.28px;transform-origin:100% 0;transform:scaleX(0.9388);">4</div>
<div class="t" id="t82" style="top:536px;height:14px;line-height:14px;font-size:12px;right:193.28px;transform-origin:100% 0;transform:scaleX(0.9436);">62,42</div>
<div class="t" id="t83" style="top:536px;height:14px;line-height:14px;font-size:12px;right:118.28px;transform-origin:100% 0;transform:scaleX(0.9434);">5%</div>
<div class="t" id="t84" style="top:536px;height:14px;line-height:14px;font-size:12px;right:38.28px;transform-origin:100% 0;transform:scaleX(0.9439);">249,68</div>
<div class="t" id="t85" style="top:572px;height:14px;line-height:14px;font-size:12px;right:1424.78px;transform-origin:100% 0;transform:scaleX(0.9388);">4</div>
<div class="t" id="t86" style="top:565px;height:10px;line-height:10px;font-size:9px;left:120.96px;transform-origin:0 0;transform:scaleX(1.0440);">2347100 | 04006363101718 | Mehle | Backwaren, -zutaten</div>
<div class="t" id="t87" style="top:580px;height:14px;line-height:14px;font-size:12px;left:120.78px;transform-origin:0 0;transform:scaleX(0.8823);">WEIZENMEHL TYP 550 1KG FRIESSINGER</div>
<div class="t" id="t88" style="top:572px;height:14px;line-height:14px;font-size:12px;left:722.78px;transform-origin:0 0;transform:scaleX(0.9911);">Karton</div>
<div class="t" id="t89" style="top:572px;height:14px;line-height:14px;font-size:12px;left:797.78px;transform-origin:0 0;transform:scaleX(0.9623);">Karton a 10 Stück</div>
<div class="t" id="t90" style="top:572px;height:14px;line-height:14px;font-size:12px;right:353.28px;transform-origin:100% 0;transform:scaleX(0.9388);">0</div>
<div class="t" id="t91" style="top:572px;height:14px;line-height:14px;font-size:12px;right:193.28px;transform-origin:100% 0;transform:scaleX(0.9432);">5,16</div>
<div class="t" id="t92" style="top:572px;height:14px;line-height:14px;font-size:12px;right:118.28px;transform-origin:100% 0;transform:scaleX(0.9434);">5%</div>
<div class="t" id="t93" style="top:572px;height:14px;line-height:14px;font-size:12px;right:38.28px;transform-origin:100% 0;transform:scaleX(0.9432);">0,00</div>
<div class="t" id="t94" style="top:608px;height:14px;line-height:14px;font-size:12px;right:1424.78px;transform-origin:100% 0;transform:scaleX(0.9388);">5</div>
<div class="t" id="t95" style="top:601px;height:10px;line-height:10px;font-size:9px;left:120.96px;transform-origin:0 0;transform:scaleX(1.0458);">2111010 | 04044703001847 | Food | Food</div>
<div class="t" id="t96" style="top:616px;height:14px;line-height:14px;font-size:12px;left:120.78px;transform-origin:0 0;transform:scaleX(0.9101);">SPARGELABSCHN. M. KÖPFEN 280G DELTA</div>
<div class="t" id="t97" style="top:608px;height:14px;line-height:14px;font-size:12px;left:722.78px;transform-origin:0 0;transform:scaleX(0.9133);">Glas</div>
<div class="t" id="t98" style="top:608px;height:14px;line-height:14px;font-size:12px;left:797.78px;transform-origin:0 0;transform:scaleX(0.9016);">Glas a 1 Glas</div>
<div class="t" id="t99" style="top:608px;height:14px;line-height:14px;font-size:12px;right:353.28px;transform-origin:100% 0;transform:scaleX(0.9388);">3</div>
<div class="t" id="t100" style="top:608px;height:14px;line-height:14px;font-size:12px;right:193.28px;transform-origin:100% 0;transform:scaleX(0.9432);">2,20</div>
<div class="t" id="t101" style="top:608px;height:14px;line-height:14px;font-size:12px;right:118.28px;transform-origin:100% 0;transform:scaleX(0.9434);">5%</div>
<div class="t" id="t102" style="top:608px;height:14px;line-height:14px;font-size:12px;right:38.28px;transform-origin:100% 0;transform:scaleX(0.9432);">6,60</div>
<div class="t" id="t103" style="top:644px;height:14px;line-height:14px;font-size:12px;right:1424.78px;transform-origin:100% 0;transform:scaleX(0.9388);">6</div>
<div class="t" id="t104" style="top:637px;height:10px;line-height:10px;font-size:9px;left:120.96px;transform-origin:0 0;transform:scaleX(1.0323);">0343030 | 08710609602056 | Gemüse | Gemüse</div>
<div class="t" id="t105" style="top:652px;height:14px;line-height:14px;font-size:12px;left:120.78px;transform-origin:0 0;transform:scaleX(0.9383);">CHAMPIGNON 2.W SCHEIB ATG 2300G 5/1</div>
<div class="t" id="t106" style="top:644px;height:14px;line-height:14px;font-size:12px;left:642.78px;transform-origin:0 0;transform:scaleX(0.9911);">Karton</div>
<div class="t" id="t107" style="top:644px;height:14px;line-height:14px;font-size:12px;left:722.78px;transform-origin:0 0;transform:scaleX(0.9911);">Karton</div>
<div class="t" id="t108" style="top:644px;height:14px;line-height:14px;font-size:12px;left:797.78px;transform-origin:0 0;transform:scaleX(0.9519);">Karton a 3 Dose</div>
<div class="t" id="t109" style="top:644px;height:14px;line-height:14px;font-size:12px;right:428.78px;transform-origin:100% 0;transform:scaleX(0.9388);">1</div>
<div class="t" id="t110" style="top:644px;height:14px;line-height:14px;font-size:12px;right:353.28px;transform-origin:100% 0;transform:scaleX(0.9388);">1</div>
<div class="t" id="t111" style="top:644px;height:14px;line-height:14px;font-size:12px;right:273.28px;transform-origin:100% 0;transform:scaleX(0.9436);">29,76</div>
<div class="t" id="t112" style="top:644px;height:14px;line-height:14px;font-size:12px;right:193.28px;transform-origin:100% 0;transform:scaleX(0.9436);">29,76</div>
<div class="t" id="t113" style="top:644px;height:14px;line-height:14px;font-size:12px;right:118.28px;transform-origin:100% 0;transform:scaleX(0.9434);">7%</div>
<div class="t" id="t114" style="top:644px;height:14px;line-height:14px;font-size:12px;right:38.28px;transform-origin:100% 0;transform:scaleX(0.9436);">29,76</div>
<div class="t" id="t115" style="top:680px;height:14px;line-height:14px;font-size:12px;right:1424.78px;transform-origin:100% 0;transform:scaleX(0.9388);">7</div>
<div class="t" id="t116" style="top:673px;height:10px;line-height:10px;font-size:9px;left:120.96px;transform-origin:0 0;transform:scaleX(1.0440);">0996040 | 04008948114496 | Biere | Alkoholische Getränke</div>
<div class="t" id="t117" style="top:688px;height:14px;line-height:14px;font-size:12px;left:120.78px;transform-origin:0 0;transform:scaleX(0.8689);">JEVER PILS 6/0,33L</div>
<div class="t" id="t118" style="top:680px;height:14px;line-height:14px;font-size:12px;left:642.78px;transform-origin:0 0;transform:scaleX(0.9666);">Kiste</div>
<div class="t" id="t119" style="top:680px;height:14px;line-height:14px;font-size:12px;left:722.78px;transform-origin:0 0;transform:scaleX(0.9666);">Kiste</div>
<div class="t" id="t120" style="top:680px;height:14px;line-height:14px;font-size:12px;left:797.78px;transform-origin:0 0;transform:scaleX(0.9541);">Kiste a 4 Packung</div>
<div class="t" id="t121" style="top:680px;height:14px;line-height:14px;font-size:12px;right:428.78px;transform-origin:100% 0;transform:scaleX(0.9388);">2</div>
<div class="t" id="t122" style="top:680px;height:14px;line-height:14px;font-size:12px;right:353.28px;transform-origin:100% 0;transform:scaleX(0.9388);">2</div>
<div class="t" id="t123" style="top:680px;height:14px;line-height:14px;font-size:12px;right:273.28px;transform-origin:100% 0;transform:scaleX(0.9436);">12,35</div>
<div class="t" id="t124" style="top:680px;height:14px;line-height:14px;font-size:12px;right:193.28px;transform-origin:100% 0;transform:scaleX(0.9436);">12,35</div>
<div class="t" id="t125" style="top:680px;height:14px;line-height:14px;font-size:12px;right:118.28px;transform-origin:100% 0;transform:scaleX(0.9433);">19%</div>
<div class="t" id="t126" style="top:680px;height:14px;line-height:14px;font-size:12px;right:38.28px;transform-origin:100% 0;transform:scaleX(0.9436);">24,70</div>
<div class="t" id="t127" style="top:716px;height:14px;line-height:14px;font-size:12px;right:1424.78px;transform-origin:100% 0;transform:scaleX(0.9388);">8</div>
<div class="t" id="t128" style="top:709px;height:10px;line-height:10px;font-size:9px;left:120.96px;transform-origin:0 0;transform:scaleX(1.0411);">0215240 | 04102430002404 | Biere | Alkoholische Getränke</div>
<div class="t" id="t129" style="top:724px;height:14px;line-height:14px;font-size:12px;left:120.78px;transform-origin:0 0;transform:scaleX(0.8639);">BITBURGER PILS 0,5L DS</div>
<div class="t" id="t130" style="top:716px;height:14px;line-height:14px;font-size:12px;left:642.78px;transform-origin:0 0;transform:scaleX(0.9911);">Karton</div>
<div class="t" id="t131" style="top:716px;height:14px;line-height:14px;font-size:12px;left:722.78px;transform-origin:0 0;transform:scaleX(0.9911);">Karton</div>
<div class="t" id="t132" style="top:716px;height:14px;line-height:14px;font-size:12px;left:797.78px;transform-origin:0 0;transform:scaleX(0.9506);">Karton a 24 Dose</div>
<div class="t" id="t133" style="top:716px;height:14px;line-height:14px;font-size:12px;right:428.78px;transform-origin:100% 0;transform:scaleX(0.9388);">1</div>
<div class="t" id="t134" style="top:716px;height:14px;line-height:14px;font-size:12px;right:353.28px;transform-origin:100% 0;transform:scaleX(0.9388);">1</div>
<div class="t" id="t135" style="top:716px;height:14px;line-height:14px;font-size:12px;right:273.28px;transform-origin:100% 0;transform:scaleX(0.9436);">12,00</div>
<div class="t" id="t136" style="top:716px;height:14px;line-height:14px;font-size:12px;right:193.28px;transform-origin:100% 0;transform:scaleX(0.9436);">12,00</div>
<div class="t" id="t137" style="top:716px;height:14px;line-height:14px;font-size:12px;right:118.28px;transform-origin:100% 0;transform:scaleX(0.9433);">19%</div>
<div class="t" id="t138" style="top:716px;height:14px;line-height:14px;font-size:12px;right:38.28px;transform-origin:100% 0;transform:scaleX(0.9436);">12,00</div>
<div class="t" id="t139" style="top:752px;height:14px;line-height:14px;font-size:12px;right:1424.78px;transform-origin:100% 0;transform:scaleX(0.9388);">9</div>
<div class="t" id="t140" style="top:745px;height:10px;line-height:10px;font-size:9px;left:120.96px;transform-origin:0 0;transform:scaleX(1.0358);">0082040 | 05411361001738 | Gemüse | Gemüse</div>
<div class="t" id="t141" style="top:760px;height:14px;line-height:14px;font-size:12px;left:120.78px;transform-origin:0 0;transform:scaleX(0.9208);">BABYMOEHREN 6/14 2,5KG TK ARDO</div>
<div class="t" id="t142" style="top:752px;height:14px;line-height:14px;font-size:12px;left:642.78px;transform-origin:0 0;transform:scaleX(0.9911);">Karton</div>
<div class="t" id="t143" style="top:752px;height:14px;line-height:14px;font-size:12px;left:722.78px;transform-origin:0 0;transform:scaleX(0.9911);">Karton</div>
<div class="t" id="t144" style="top:752px;height:14px;line-height:14px;font-size:12px;left:797.78px;transform-origin:0 0;transform:scaleX(0.9629);">Karton a 4 Beutel</div>
<div class="t" id="t145" style="top:752px;height:14px;line-height:14px;font-size:12px;right:428.78px;transform-origin:100% 0;transform:scaleX(0.9388);">2</div>
<div class="t" id="t146" style="top:752px;height:14px;line-height:14px;font-size:12px;right:353.28px;transform-origin:100% 0;transform:scaleX(0.9388);">2</div>
<div class="t" id="t147" style="top:752px;height:14px;line-height:14px;font-size:12px;right:273.28px;transform-origin:100% 0;transform:scaleX(0.9436);">11,92</div>
<div class="t" id="t148" style="top:752px;height:14px;line-height:14px;font-size:12px;right:193.28px;transform-origin:100% 0;transform:scaleX(0.9436);">11,92</div>
<div class="t" id="t149" style="top:752px;height:14px;line-height:14px;font-size:12px;right:118.28px;transform-origin:100% 0;transform:scaleX(0.9434);">7%</div>
<div class="t" id="t150" style="top:752px;height:14px;line-height:14px;font-size:12px;right:38.28px;transform-origin:100% 0;transform:scaleX(0.9436);">23,84</div>
<div class="t" id="t151" style="top:788px;height:14px;line-height:14px;font-size:12px;right:1424.78px;transform-origin:100% 0;transform:scaleX(0.9419);">10</div>
<div class="t" id="t152" style="top:781px;height:10px;line-height:10px;font-size:9px;left:120.96px;transform-origin:0 0;transform:scaleX(1.0511);">0954120 | 04025839012020 | Milch | Eier-, Käse-, Molkereiprodukte</div>
<div class="t" id="t153" style="top:796px;height:14px;line-height:14px;font-size:12px;left:120.78px;transform-origin:0 0;transform:scaleX(0.9605);">H-MILCH 1,5% 1L MILCHWOLKE</div>
<div class="t" id="t154" style="top:788px;height:14px;line-height:14px;font-size:12px;left:642.78px;transform-origin:0 0;transform:scaleX(0.9911);">Karton</div>
<div class="t" id="t155" style="top:788px;height:14px;line-height:14px;font-size:12px;left:722.78px;transform-origin:0 0;transform:scaleX(0.9911);">Karton</div>
<div class="t" id="t156" style="top:788px;height:14px;line-height:14px;font-size:12px;left:797.78px;transform-origin:0 0;transform:scaleX(0.9663);">Karton a 12 Packung</div>
<div class="t" id="t157" style="top:788px;height:14px;line-height:14px;font-size:12px;right:428.78px;transform-origin:100% 0;transform:scaleX(0.9388);">2</div>
<div class="t" id="t158" style="top:788px;height:14px;line-height:14px;font-size:12px;right:353.28px;transform-origin:100% 0;transform:scaleX(0.9388);">2</div>
<div class="t" id="t159" style="top:788px;height:14px;line-height:14px;font-size:12px;right:273.28px;transform-origin:100% 0;transform:scaleX(0.9432);">6,75</div>
<div class="t" id="t160" style="top:788px;height:14px;line-height:14px;font-size:12px;right:193.28px;transform-origin:100% 0;transform:scaleX(0.9432);">6,75</div>
<div class="t" id="t161" style="top:788px;height:14px;line-height:14px;font-size:12px;right:118.28px;transform-origin:100% 0;transform:scaleX(0.9434);">7%</div>
<div class="t" id="t162" style="top:788px;height:14px;line-height:14px;font-size:12px;right:38.28px;transform-origin:100% 0;transform:scaleX(0.9436);">13,50</div>
<div class="t" id="t163" style="top:824px;height:14px;line-height:14px;font-size:12px;right:1424.78px;transform-origin:100% 0;transform:scaleX(0.9417);">11</div>
<div class="t" id="t164" style="top:817px;height:10px;line-height:10px;font-size:9px;left:120.96px;transform-origin:0 0;transform:scaleX(1.0195);">1941120 | 04028286420806</div>
<div class="t" id="t165" style="top:832px;height:14px;line-height:14px;font-size:12px;left:120.78px;transform-origin:0 0;transform:scaleX(0.8972);">SAUERKRAUT DELI ATG 770G 850ML</div>
<div class="t" id="t166" style="top:824px;height:14px;line-height:14px;font-size:12px;left:642.78px;transform-origin:0 0;transform:scaleX(0.9911);">Karton</div>
<div class="t" id="t167" style="top:824px;height:14px;line-height:14px;font-size:12px;left:722.78px;transform-origin:0 0;transform:scaleX(0.9911);">Karton</div>
<div class="t" id="t168" style="top:824px;height:14px;line-height:14px;font-size:12px;left:797.78px;transform-origin:0 0;transform:scaleX(0.9506);">Karton a 12 Dose</div>
<div class="t" id="t169" style="top:824px;height:14px;line-height:14px;font-size:12px;right:428.78px;transform-origin:100% 0;transform:scaleX(0.9388);">1</div>
<div class="t" id="t170" style="top:824px;height:14px;line-height:14px;font-size:12px;right:353.28px;transform-origin:100% 0;transform:scaleX(0.9388);">1</div>
<div class="t" id="t171" style="top:824px;height:14px;line-height:14px;font-size:12px;right:273.28px;transform-origin:100% 0;transform:scaleX(0.9436);">10,27</div>
<div class="t" id="t172" style="top:824px;height:14px;line-height:14px;font-size:12px;right:193.28px;transform-origin:100% 0;transform:scaleX(0.9436);">10,27</div>
<div class="t" id="t173" style="top:824px;height:14px;line-height:14px;font-size:12px;right:118.28px;transform-origin:100% 0;transform:scaleX(0.9434);">7%</div>
<div class="t" id="t174" style="top:824px;height:14px;line-height:14px;font-size:12px;right:38.28px;transform-origin:100% 0;transform:scaleX(0.9436);">10,27</div>
<svg style="left:132px;top:852px" width="16" height="14" viewBox="0 0 16 14"><path d="M7.6 0.8 L14.2 12.4 H1 Z" fill="#ffc107" stroke="#ffc107" stroke-width="0.6" stroke-linejoin="round"/><path d="M7.6 4.6 V8.9 M7.6 9.9 V11.2" stroke="#fff" stroke-width="1.1"/></svg>
<div class="t" id="t175" style="top:853px;height:14px;line-height:14px;font-size:12px;left:151.28px;transform-origin:0 0;transform:scaleX(0.9717);">Der Wert für <b>Buchungskonto</b> fehlt.</div>
<div class="t" id="t176" style="top:882px;height:14px;line-height:14px;font-size:12px;right:1424.78px;transform-origin:100% 0;transform:scaleX(0.9419);">12</div>
<div class="t" id="t177" style="top:875px;height:10px;line-height:10px;font-size:9px;left:120.96px;transform-origin:0 0;transform:scaleX(1.0063);">0437010 | 04000492005626 | Desserts | Süsswaren</div>
<div class="t" id="t178" style="top:890px;height:14px;line-height:14px;font-size:12px;left:120.78px;transform-origin:0 0;transform:scaleX(0.8875);">DESSERT KIRSCHEN ODZ 3KG LUK</div>
<div class="t" id="t179" style="top:882px;height:14px;line-height:14px;font-size:12px;left:642.78px;transform-origin:0 0;transform:scaleX(0.9565);">Dose</div>
<div class="t" id="t180" style="top:882px;height:14px;line-height:14px;font-size:12px;left:722.78px;transform-origin:0 0;transform:scaleX(0.9565);">Dose</div>
<div class="t" id="t181" style="top:882px;height:14px;line-height:14px;font-size:12px;left:797.78px;transform-origin:0 0;transform:scaleX(0.9295);">Dose a 1 Dose</div>
<div class="t" id="t182" style="top:882px;height:14px;line-height:14px;font-size:12px;right:428.78px;transform-origin:100% 0;transform:scaleX(0.9388);">3</div>
<div class="t" id="t183" style="top:882px;height:14px;line-height:14px;font-size:12px;right:353.28px;transform-origin:100% 0;transform:scaleX(0.9388);">3</div>
<div class="t" id="t184" style="top:882px;height:14px;line-height:14px;font-size:12px;right:273.28px;transform-origin:100% 0;transform:scaleX(0.9436);">10,25</div>
<div class="t" id="t185" style="top:882px;height:14px;line-height:14px;font-size:12px;right:193.28px;transform-origin:100% 0;transform:scaleX(0.9436);">10,25</div>
<div class="t" id="t186" style="top:882px;height:14px;line-height:14px;font-size:12px;right:118.28px;transform-origin:100% 0;transform:scaleX(0.9434);">7%</div>
<div class="t" id="t187" style="top:882px;height:14px;line-height:14px;font-size:12px;right:38.28px;transform-origin:100% 0;transform:scaleX(0.9436);">30,75</div>
</div></div>
<div class="b" style="left:366px;top:495px;width:229px;height:158px;background:#f2f2f2;box-sizing:border-box;border:1px solid #a0a0a0;box-shadow:2px 2px 1.5px rgba(0,0,0,.38),3px 3px 2px rgba(0,0,0,.1);"></div>
<div class="b" style="left:396px;top:497px;width:1px;height:154px;background:#e9e9e9;"></div>
<div class="b" style="left:397px;top:546px;width:194px;height:1px;background:#d7d7d7;"></div>
<div class="b" style="left:397px;top:578px;width:194px;height:1px;background:#d7d7d7;"></div>
<div class="b" style="left:369px;top:584px;width:223px;height:22px;background:#91c9f7;"></div>
<div class="t" id="t188" style="top:502.5px;height:14px;line-height:14px;font-size:12px;left:399.78px;transform-origin:0 0;transform:scaleX(0.9679);">Eigenschaften...</div>
<div class="t" id="t189" style="top:524.5px;height:14px;line-height:14px;font-size:12px;left:399.78px;transform-origin:0 0;transform:scaleX(0.9915);">Artikel löschen...</div>
<div class="t" id="t190" style="top:556.5px;height:14px;line-height:14px;font-size:12px;left:399.78px;transform-origin:0 0;transform:scaleX(0.9117);">Ersetzen...</div>
<div class="t" id="t191" style="top:588.5px;height:14px;line-height:14px;font-size:12px;left:399.78px;transform-origin:0 0;transform:scaleX(0.9812);">Artikel verschieben...</div>
<div class="t" id="t192" style="top:610.5px;height:14px;line-height:14px;font-size:12px;left:399.78px;transform-origin:0 0;">Buchungskonto ändern...</div>
<div class="t" id="t193" style="top:632.5px;height:14px;line-height:14px;font-size:12px;color:#9b9b9b;left:399.78px;transform-origin:0 0;transform:scaleX(0.9965);">Rückgabe- / Reklamationsgrund...</div>
<div class="b" style="left:408px;top:611px;width:108px;height:18px;background:#ffffe1;box-sizing:border-box;border:1px solid #000;box-shadow:1.5px 1.5px 1.5px rgba(0,0,0,.45);"></div>
<div class="t" id="t194" style="top:613.5px;height:14px;line-height:14px;font-size:12px;left:411.78px;transform-origin:0 0;transform:scaleX(0.9892);">Artikel verschieben</div>
</body></html>
